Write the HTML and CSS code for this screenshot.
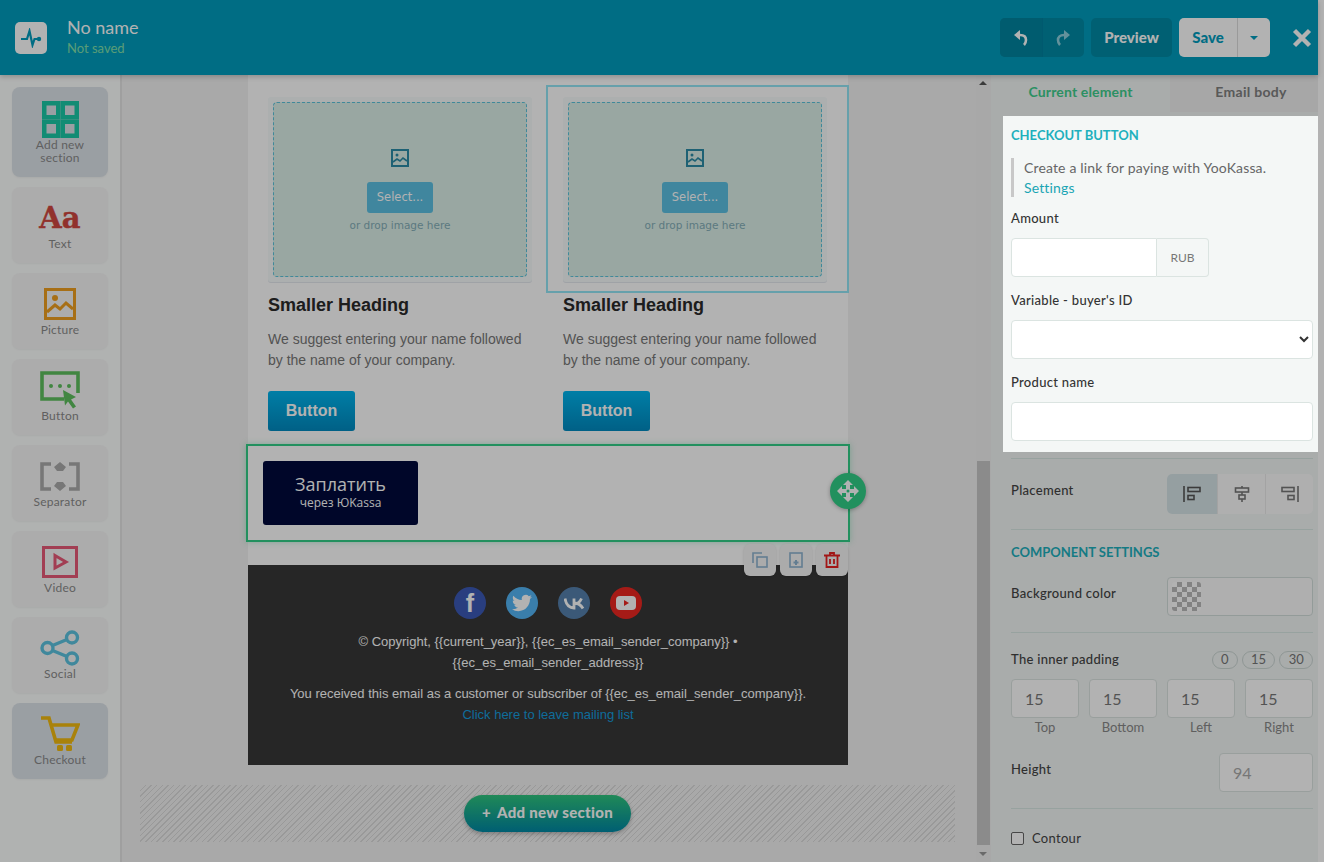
FILE: index.html
```html
<!DOCTYPE html>
<html lang="en">
<head>
<meta charset="utf-8">
<title>Email editor</title>
<link rel="stylesheet" href="styles.css">
</head>
<body>
<div class="app">
  <header class="topbar">
    <div class="logo"><svg width="22" height="20" viewBox="0 0 22 20"><path d="M1 11h6l2.500-8 3 14 2-6h4" fill="none" stroke="#009cbe" stroke-width="2.200"/><circle cx="19" cy="11" r="2.200" fill="#009cbe"/></svg></div>
    <div class="doc"><div class="doc-name">No name</div><div class="doc-state">Not saved</div></div>
    <div class="actions">
      <div class="undo-group">
        <button class="undo-btn"><svg width="16" height="16" viewBox="0 0 16 16"><path d="M7 0 1 5l6 5z" fill="#fff"/><path d="M5 5h2c4 0 6 2 6 5 0 2-1 4-2 5" fill="none" stroke="#fff" stroke-width="2.600"/></svg></button>
        <button class="undo-btn"><svg width="16" height="16" viewBox="0 0 16 16"><path d="M9 0l6 5-6 5z" fill="#8fd0de"/><path d="M11 5H9c-4 0-6 2-6 5 0 2 1 4 2 5" fill="none" stroke="#8fd0de" stroke-width="2.600"/></svg></button>
      </div>
      <button class="preview">Preview</button>
      <div class="save-group"><button class="save">Save</button><button class="save-caret"><span class="caret"></span></button></div>
      <button class="close"><svg width="20" height="20" viewBox="0 0 20 20"><path d="M2.500 2.500l15 15M17.500 2.500l-15 15" stroke="#fff" stroke-width="4.400"/></svg></button>
    </div>
  </header>

  <div class="workspace">
    <nav class="sidebar">
      <div class="tool tool-active tool-tall">
        <svg width="37" height="37" viewBox="0 0 37 37" fill="none" stroke="#1ac9a6" stroke-width="4.500"><rect x="2.250" y="2.250" width="14" height="14"/><rect x="20.750" y="2.250" width="14" height="14"/><rect x="2.250" y="20.750" width="14" height="14"/><rect x="20.750" y="20.750" width="14" height="14"/></svg>
        <span class="tool-label">Add new<br>section</span>
      </div>
      <div class="tool"><span class="aa">Aa</span><span class="tool-label">Text</span></div>
      <div class="tool">
        <svg width="32" height="32" viewBox="0 0 32 32"><rect x="1.500" y="1.500" width="29" height="29" fill="none" stroke="#f0a020" stroke-width="3"/><circle cx="11" cy="10" r="3" fill="#f0a020"/><path d="M3 24l8-7 5 4 6-6 7 6" fill="none" stroke="#f0a020" stroke-width="3"/></svg>
        <span class="tool-label">Picture</span>
      </div>
      <div class="tool">
        <svg width="40" height="38" viewBox="0 0 40 38"><path d="M24 28H2V2h36v20" fill="none" stroke="#5ec05e" stroke-width="3.600"/><circle cx="11" cy="15" r="2" fill="#5ec05e"/><circle cx="20" cy="15" r="2" fill="#5ec05e"/><circle cx="29" cy="15" r="2" fill="#5ec05e"/><path d="M23 19l13 7-5 2.500 5 7-3 2-5-7-3 4z" fill="#5ec05e"/></svg>
        <span class="tool-label">Button</span>
      </div>
      <div class="tool">
        <svg width="40" height="29" viewBox="0 0 40 29"><path d="M11 2H2v25h9M29 2h9v25h-9" fill="none" stroke="#ababab" stroke-width="3.600"/><path d="M20 0l6 5-3 4h-6l-3-4zM20 29l6-5-3-4h-6l-3 4z" fill="#ababab"/></svg>
        <span class="tool-label">Separator</span>
      </div>
      <div class="tool">
        <svg width="36" height="32" viewBox="0 0 36 32"><rect x="1.500" y="1.500" width="33" height="29" fill="none" stroke="#e85a78" stroke-width="3"/><path d="M13 9.500l11 6.500-11 6z" fill="none" stroke="#e85a78" stroke-width="3"/></svg>
        <span class="tool-label">Video</span>
      </div>
      <div class="tool">
        <svg width="40" height="36" viewBox="0 0 40 36" fill="none" stroke="#5cc3e0" stroke-width="3.400"><circle cx="32" cy="7.500" r="5.500"/><circle cx="32" cy="28.500" r="5.500"/><circle cx="7.500" cy="18" r="5.500"/><path d="M12.500 15.500 27 9.500M12.500 20.500 27 26.500"/></svg>
        <span class="tool-label">Social</span>
      </div>
      <div class="tool tool-active">
        <svg width="40" height="36" viewBox="0 0 40 36"><path d="M1 2h8l7 24h16" fill="none" stroke="#f2bb10" stroke-width="3.600"/><path d="M10 9h28l-6 15H15" fill="none" stroke="#f2bb10" stroke-width="3.600"/><rect x="17" y="29" width="6" height="6" rx="1.500" fill="#f2bb10"/><rect x="26" y="29" width="6" height="6" rx="1.500" fill="#f2bb10"/></svg>
        <span class="tool-label">Checkout</span>
      </div>
    </nav>

    <main class="canvas">
      <div class="email">
        <div class="columns">
          <div class="col">
            <div class="dropzone"><div class="dropzone-inner">
              <svg class="pic" width="18" height="18" viewBox="0 0 18 18"><rect x="1" y="1" width="16" height="16" fill="none" stroke="#2c8ba6" stroke-width="2"/><circle cx="6" cy="6" r="1.500" fill="#2c8ba6"/><path d="M2 13l4-3 3 2 3-3 4 3" fill="none" stroke="#2c8ba6" stroke-width="1.600"/></svg>
              <span class="select-btn">Select...</span>
              <span class="drop-text">or drop image here</span>
            </div></div>
            <h3 class="col-title">Smaller Heading</h3>
            <p class="col-text">We suggest entering your name followed by the name of your company.</p>
            <span class="email-btn">Button</span>
          </div>
          <div class="col col-selected">
            <div class="dropzone"><div class="dropzone-inner">
              <svg class="pic" width="18" height="18" viewBox="0 0 18 18"><rect x="1" y="1" width="16" height="16" fill="none" stroke="#2c8ba6" stroke-width="2"/><circle cx="6" cy="6" r="1.500" fill="#2c8ba6"/><path d="M2 13l4-3 3 2 3-3 4 3" fill="none" stroke="#2c8ba6" stroke-width="1.600"/></svg>
              <span class="select-btn">Select...</span>
              <span class="drop-text">or drop image here</span>
            </div></div>
            <h3 class="col-title">Smaller Heading</h3>
            <p class="col-text">We suggest entering your name followed by the name of your company.</p>
            <span class="email-btn">Button</span>
            <span class="selected-frame"></span>
          </div>
        </div>

        <div class="checkout-block">
          <div class="pay-btn"><span class="pay-main">Заплатить</span><span class="pay-sub">через ЮKassa</span></div>
          <span class="move-handle"><svg width="24" height="24" viewBox="0 0 24 24" fill="#fff"><path d="M12 1l5 5h-3v4h4V7l5 5-5 5v-3h-4v4h3l-5 5-5-5h3v-4H6v3l-5-5 5-5v3h4V6H7z"/><circle cx="12" cy="12" r="1.500" fill="#31cf87"/></svg></span>
          <div class="block-tools">
            <span class="block-tool"><svg width="16" height="16" viewBox="0 0 16 16" fill="none" stroke="#8fb4d0" stroke-width="1.600"><path d="M10 1H1v10"/><rect x="5" y="5" width="10" height="10"/></svg></span>
            <span class="block-tool"><svg width="14" height="16" viewBox="0 0 14 16" fill="none" stroke="#8fb4d0" stroke-width="1.600"><rect x="1" y="1" width="12" height="14"/><path d="M7 8v5M4.500 10.500h5" stroke-width="2"/></svg></span>
            <span class="block-tool"><svg width="16" height="16" viewBox="0 0 16 16" fill="none" stroke="#e82020" stroke-width="1.800"><path d="M0 3.500h16M6 3V1h4v2M2.500 4v11h11V4M6 7v5M10 7v5"/></svg></span>
          </div>
        </div>

        <footer class="mail-footer">
          <div class="socials">
            <span class="social fb">f</span>
            <span class="social tw"><svg width="20" height="20" viewBox="0 0 24 24" fill="#fff"><path d="M23.953 4.570a10 10 0 01-2.825.775 4.958 4.958 0 002.163-2.723c-.951.555-2.005.959-3.127 1.184a4.920 4.920 0 00-8.384 4.482C7.690 8.095 4.067 6.130 1.640 3.162a4.822 4.822 0 00-.666 2.475c0 1.710.870 3.213 2.188 4.096a4.904 4.904 0 01-2.228-.616v.060a4.923 4.923 0 003.946 4.827 4.996 4.996 0 01-2.212.085 4.936 4.936 0 004.604 3.417 9.867 9.867 0 01-6.102 2.105c-.390 0-.779-.023-1.170-.067a13.995 13.995 0 007.557 2.209c9.053 0 13.998-7.496 13.998-13.985 0-.210 0-.420-.015-.630A9.935 9.935 0 0024 4.590z"/></svg></span>
            <span class="social vk"><svg width="21" height="13" viewBox="0 0 21 13" fill="none" stroke="#fff" stroke-width="2.800"><path d="M1 1.500c1 6 4 9.500 9 9.500V1.500M10 7c3 0 6-2 7.500-5.500M10 6c4 0 7 2 9 5.500"/></svg></span>
            <span class="social yt"><svg width="20" height="14" viewBox="0 0 20 14"><rect width="20" height="14" rx="4" fill="#fff"/><path d="M8 4l5 3-5 3z" fill="#ec2822"/></svg></span>
          </div>
          <p class="footer-line">© Copyright, {{current_year}}, {{ec_es_email_sender_company}} •<br>{{ec_es_email_sender_address}}</p>
          <p class="footer-line footer-gap">You received this email as a customer or subscriber of {{ec_es_email_sender_company}}.<br><a class="footer-link">Click here to leave mailing list</a></p>
        </footer>
      </div>
      <div class="add-zone"><button class="add-btn"><span class="add-plus">+</span>Add new section</button></div>
    </main>

    <div class="v-scroll"><span class="arrow arrow-up"></span><span class="thumb"></span><span class="arrow arrow-down"></span></div>

    <aside class="props">
      <div class="tabs"><div class="tab tab-current">Current element</div><div class="tab tab-other">Email body</div></div>
      <section class="spot">
        <h4 class="section-title">CHECKOUT BUTTON</h4>
        <div class="note">Create a link for paying with YooKassa.<br><a class="note-link">Settings</a></div>
        <label class="field-label field-first">Amount</label>
        <div class="amount"><input class="input amount-input" type="text"><span class="addon">RUB</span></div>
        <label class="field-label">Variable - buyer's ID</label>
        <select class="input select-input"><option></option></select>
        <label class="field-label">Product name</label>
        <input class="input" type="text">
      </section>
      <div class="prop-body">
        <div class="rule rule-first"></div>
        <div class="row placement-row">
          <span class="row-label row-label-high">Placement</span>
          <div class="align-group">
            <span class="align align-on"><svg width="18" height="16" viewBox="0 0 18 16" fill="none" stroke="#555" stroke-width="1.600"><path d="M1 0v16"/><rect x="5" y="1.500" width="12" height="4"/><rect x="5" y="9.500" width="6" height="4"/></svg></span>
            <span class="align"><svg width="16" height="16" viewBox="0 0 16 16" fill="none" stroke="#777" stroke-width="1.600"><path d="M8 0v2M8 6v3M8 13v3"/><rect x="1.500" y="2" width="13" height="4"/><rect x="5" y="9" width="6" height="4"/></svg></span>
            <span class="align"><svg width="18" height="16" viewBox="0 0 18 16" fill="none" stroke="#777" stroke-width="1.600"><path d="M17 0v16"/><rect x="1" y="1.500" width="12" height="4"/><rect x="7" y="9.500" width="6" height="4"/></svg></span>
          </div>
        </div>
        <div class="rule"></div>
        <h4 class="section-title section-second">COMPONENT SETTINGS</h4>
        <div class="row bg-row">
          <span class="row-label row-label-high">Background color</span>
          <div class="color-input"><span class="checker"></span></div>
        </div>
        <div class="rule rule-bg"></div>
        <div class="row padding-head">
          <span class="row-label">The inner padding</span>
          <div class="chips"><span class="chip">0</span><span class="chip">15</span><span class="chip">30</span></div>
        </div>
        <div class="pad-grid">
          <div class="pad"><input class="input pad-input" type="text" value="15"><span class="pad-label">Top</span></div>
          <div class="pad"><input class="input pad-input" type="text" value="15"><span class="pad-label">Bottom</span></div>
          <div class="pad"><input class="input pad-input" type="text" value="15"><span class="pad-label">Left</span></div>
          <div class="pad"><input class="input pad-input" type="text" value="15"><span class="pad-label">Right</span></div>
        </div>
        <div class="row height-row">
          <span class="row-label row-label-high">Height</span>
          <input class="input height-input" type="text" placeholder="94">
        </div>
        <div class="rule rule-height"></div>
        <label class="contour"><span class="checkbox"></span>Contour</label>
      </div>
    </aside>
    <div class="page-scroll"></div>
  </div>
  <div class="overlay"></div>
</div>
</body>
</html>
```

FILE: styles.css
```css
* { box-sizing: border-box; }
html, body { margin: 0; height: 100%; overflow: hidden; }
body { font-family: Lato, "Open Sans", sans-serif; color: #444; }
button { font: inherit; border: 0; padding: 0; cursor: pointer; }
h3, h4, p { margin: 0; }

.app { width: 1324px; height: 862px; display: flex; flex-direction: column; }
.overlay { position: fixed; inset: 0; background: rgba(0, 0, 0, .3); z-index: 5; }

.topbar { height: 75px; width: 1318px; flex: none; background: #009cbe; display: flex; align-items: center; padding: 0 6px 0 15px; box-shadow: 0 2px 5px rgba(0,0,0,.2); position: relative; z-index: 2; }
.logo { width: 32px; height: 32px; background: #fff; border-radius: 5px; display: flex; align-items: center; justify-content: center; margin-right: 20px; }
.doc { padding-bottom: 4px; }
.doc-name { font-size: 18px; color: #fff; line-height: 24px; }
.doc-state { font-size: 13px; color: #82e0aa; line-height: 18px; }
.actions { margin-left: auto; display: flex; align-items: center; }
.undo-group { display: flex; width: 84px; height: 39px; border-radius: 5px; background: #008aa5; overflow: hidden; margin-right: 7px; }
.undo-btn { flex: 1; background: transparent; display: flex; align-items: center; justify-content: center; }
.undo-btn:first-child { background: #0085a0; border-right: 1px solid #0080a0; }
.preview { width: 81px; height: 39px; border-radius: 5px; background: #008aa5; color: #fff; font-weight: 900; font-size: 15px; padding-bottom: 2px; margin-right: 7px; }
.save-group { display: flex; width: 91px; height: 39px; background: #fff; border-radius: 5px; overflow: hidden; margin-right: 22px; }
.save { width: 59px; background: transparent; color: #009cbe; font-weight: 900; font-size: 15px; padding-bottom: 2px; border-right: 1px solid #ddd; }
.save-caret { flex: 1; background: transparent; display: flex; align-items: center; justify-content: center; }
.caret { width: 0; height: 0; border: 4px solid transparent; border-top-color: #009cbe; border-bottom: 0; }
.close { background: transparent; display: flex; width: 20px; height: 20px; }

.workspace { flex: 1; display: flex; min-height: 0; }

.sidebar { width: 120px; flex: none; background: #fdfffe; padding: 12px 12px 0; display: flex; flex-direction: column; gap: 10px; }
.tool { height: 76px; background: #f7f7f7; border-radius: 8px; display: grid; grid-template-rows: 38px auto; justify-items: center; align-items: center; padding: 12px 0 13px; box-shadow: 0 1px 2px rgba(0,0,0,.05); }
.tool-tall { height: 90px; grid-template-rows: 37px auto; padding-top: 14px; }
.tool-active { background: #dde4ea; }
.tool-label { font-size: 12px; line-height: 13px; letter-spacing: .2px; color: #8a8a8a; text-align: center; }
.aa { font-family: "DejaVu Serif", serif; font-weight: 700; font-size: 29px; line-height: 34px; color: #d0473f; -webkit-text-stroke: .4px #d0473f; }

.canvas { width: 856px; flex: none; background: #f2f2f2; box-shadow: inset 2px 0 0 #e4e4e4; display: flex; flex-direction: column; }
.email { width: 600px; margin: 0 auto; background: #fff; font-family: "Liberation Sans", Arial, sans-serif; }
.columns { display: flex; padding: 22px 0 0 20px; }
.col { width: 295px; flex: none; position: relative; }
.dropzone { width: 264px; height: 185px; background: #f6fbfb; border-radius: 3px; padding: 5px; box-shadow: 0 1px 0 #e4e8ee; }
.dropzone-inner { height: 175px; background: #dcf0e8; border: 1px dashed #5cc4dd; border-radius: 4px; display: flex; flex-direction: column; align-items: center; padding-top: 46px; }
.pic { display: block; margin-bottom: 15px; }
.select-btn { width: 66px; height: 31px; background: #5cc0e2; border-radius: 3px; color: #fff; font-family: "DejaVu Sans", sans-serif; font-size: 11.500px; line-height: 31px; text-align: center; }
.drop-text { font-family: "DejaVu Sans", sans-serif; font-size: 10.500px; line-height: 18px; margin-top: 3px; color: #84aeb8; }
.col-title { font-size: 18px; line-height: 20px; color: #2a2a2a; font-weight: 700; margin-top: 13px; }
.col-text { font-size: 14px; line-height: 21px; color: #777; margin-top: 14px; width: 264px; }
.email-btn { display: block; width: 87px; height: 40px; margin-top: 20px; background: linear-gradient(#00b5ee, #008ac0); border-radius: 3px; color: #fff; font-weight: 700; font-size: 16px; line-height: 40px; text-align: center; }
.selected-frame { position: absolute; left: -17px; top: -12px; width: 303px; height: 208px; border: 2px solid #93e6f5; }

.checkout-block { position: relative; margin: 13px -2px 23px; width: 604px; height: 98px; border: 2px solid #31cf87; padding: 15px; box-shadow: 0 0 6px rgba(49,207,135,.35); }
.pay-btn { width: 155px; height: 64px; background: #000a3c; border-radius: 3px; color: #fff; font-family: "Open Sans", sans-serif; display: flex; flex-direction: column; align-items: center; justify-content: center; padding-bottom: 4px; }
.pay-main { font-size: 18px; line-height: 24px; }
.pay-sub { font-size: 12px; line-height: 14px; }
.move-handle { position: absolute; right: -18px; top: 27px; width: 36px; height: 36px; background: #31cf87; border-radius: 50%; display: flex; align-items: center; justify-content: center; box-shadow: 0 1px 4px rgba(0,0,0,.3); }
.block-tools { position: absolute; right: 0; top: 98px; display: flex; gap: 4px; z-index: 1; }
.block-tool { width: 32px; height: 32px; background: #f5f5f5; border-radius: 6px; display: flex; align-items: center; justify-content: center; box-shadow: 0 1px 3px rgba(0,0,0,.15); }

.mail-footer { height: 200px; background: #373737; padding-top: 22px; text-align: center; color: #fff; font-size: 13px; line-height: 21px; }
.socials { display: flex; justify-content: center; gap: 20px; margin-bottom: 12px; }
.social { width: 32px; height: 32px; border-radius: 50%; display: flex; align-items: center; justify-content: center; color: #fff; font-weight: 700; }
.fb { background: #3c5ab7; font-size: 25px; }
.tw { background: #53b5f5; }
.vk { background: #5580ad; }
.yt { background: #ec2822; }
.footer-gap { margin-top: 10px; }
.footer-link { color: #159cdd; }

.add-zone { margin: 20px 21px 0 20px; height: 57px; background: repeating-linear-gradient(-45deg, #dcdcdc 0 1px, #f2f2f2 1px 4px); display: flex; justify-content: center; padding-top: 10px; }
.add-btn { width: 167px; height: 37px; border-radius: 19px; background: linear-gradient(#2ec57e, #0088a4); color: #fff; font-weight: 900; font-size: 15px; letter-spacing: .3px; padding-bottom: 3px; box-shadow: 0 2px 4px rgba(0,0,0,.25); }
.add-plus { margin-right: 6px; }

.v-scroll { width: 15px; flex: none; background: #f1f1f1; display: flex; flex-direction: column; align-items: center; position: relative; padding-top: 386px; }
.thumb { width: 13px; height: 384px; background: #c8c8c8; }
.arrow { position: absolute; width: 0; height: 0; border: 4px solid transparent; left: 3px; }
.arrow-up { top: 6px; border-top: 0; border-bottom-color: #555; }
.arrow-down { bottom: 6px; border-bottom: 0; border-top-color: #999; }

.props { width: 327px; flex: none; background: #f2f6f5; }
.tabs { display: flex; height: 37px; font-size: 14px; font-weight: 700; letter-spacing: .15px; margin-bottom: 4px; }
.tab { width: 148px; background: #efefef; color: #808080; text-align: center; line-height: 34px; }
.tab-other { padding-left: 14px; letter-spacing: .3px; }
.tab-current { width: 179px; background: #f2f6f5; color: #3fcf8e; }
.spot { position: relative; z-index: 10; margin-left: 12px; height: 336px; background: #f4f7f6; padding: 11px 5px 0 8px; }
.section-title { font-size: 13px; line-height: 16px; color: #1eb0bd; font-weight: 700; }
.note { margin-top: 15px; border-left: 3px solid #c8c8c8; padding-left: 10px; font-size: 14px; letter-spacing: .15px; line-height: 20px; color: #666; height: 39px; }
.note-link { color: #1aa5b4; }
.field-label { display: block; font-size: 13px; letter-spacing: .3px; line-height: 16px; color: #333; font-weight: 500; margin: 15px 0 12px; }
.field-first { margin-top: 13px; }
.input { display: block; width: 100%; height: 39px; border: 1px solid #dbe4e1; border-radius: 4px; background: #fff; font-family: inherit; font-size: 14px; color: #333; padding: 0 12px; outline: 0; }
.amount { display: flex; width: 198px; }
.amount-input { width: 146px; border-radius: 4px 0 0 4px; flex: none; }
.addon { flex: 1; height: 39px; border: 1px solid #dbe4e1; border-left: 0; border-radius: 0 4px 4px 0; font-size: 12px; line-height: 37px; text-align: center; color: #777; background: #f4f7f6; }
.select-input { padding: 0 4px; }

.prop-body { padding: 0 5px 0 20px; }
.rule { height: 1px; background: #d9e8e4; }
.rule-first { margin-top: 6px; }
.row { display: flex; align-items: center; justify-content: space-between; }
.row-label { font-size: 13px; letter-spacing: .3px; color: #444; font-weight: 500; }
.row-label-high { padding-bottom: 8px; }
.placement-row { margin: 15px 0; }
.align-group { display: flex; width: 146px; height: 40px; background: #fbfbfb; border-radius: 5px; overflow: hidden; }
.align { flex: 1; display: flex; align-items: center; justify-content: center; border-left: 1px solid #eaeaea; }
.align-on { background: #d6e4e7; border-left: 0; flex: none; width: 50px; }
.section-second { margin-top: 14px; }
.bg-row { margin-top: 17px; }
.color-input { width: 146px; height: 39px; border: 1px solid #d3dedb; border-radius: 4px; background: #fbfbfb; padding: 4px; }
.checker { display: block; width: 29px; height: 29px; border-radius: 3px; background: conic-gradient(#bbb 25%, #fff 0 50%, #bbb 0 75%, #fff 0) 0 0 / 10px 10px; }
.rule-bg { margin-top: 16px; }
.padding-head { margin-top: 18px; height: 18px; }
.padding-head .row-label { padding-bottom: 2px; }
.chips { display: flex; gap: 4px; }
.chip { height: 18px; border: 1px solid #cdd8d5; border-radius: 9px; font-size: 13px; line-height: 15px; padding: 0 8.250px; color: #777; }
.pad-grid { display: grid; grid-template-columns: repeat(4, 68px); gap: 10px; margin-top: 10px; }
.pad { display: flex; flex-direction: column; }
.pad-input { height: 39px; font-size: 16px; color: #777; padding-left: 13px; }
.pad-label { font-size: 13px; line-height: 14px; text-align: center; color: #888; margin-top: 2px; }
.height-row { margin-top: 19px; }
.height-input { width: 94px; height: 39px; font-size: 16px; padding-left: 13px; }
.height-input::placeholder { color: #aaa; opacity: 1; }
.rule-height { margin-top: 16px; }
.contour { display: flex; align-items: center; margin-top: 21px; font-size: 13px; letter-spacing: .3px; color: #444; }
.checkbox { width: 13px; height: 13px; border: 1px solid #666; border-radius: 2px; background: #fff; margin-right: 8px; }

.page-scroll { width: 6px; flex: none; background: #fff; }
```
